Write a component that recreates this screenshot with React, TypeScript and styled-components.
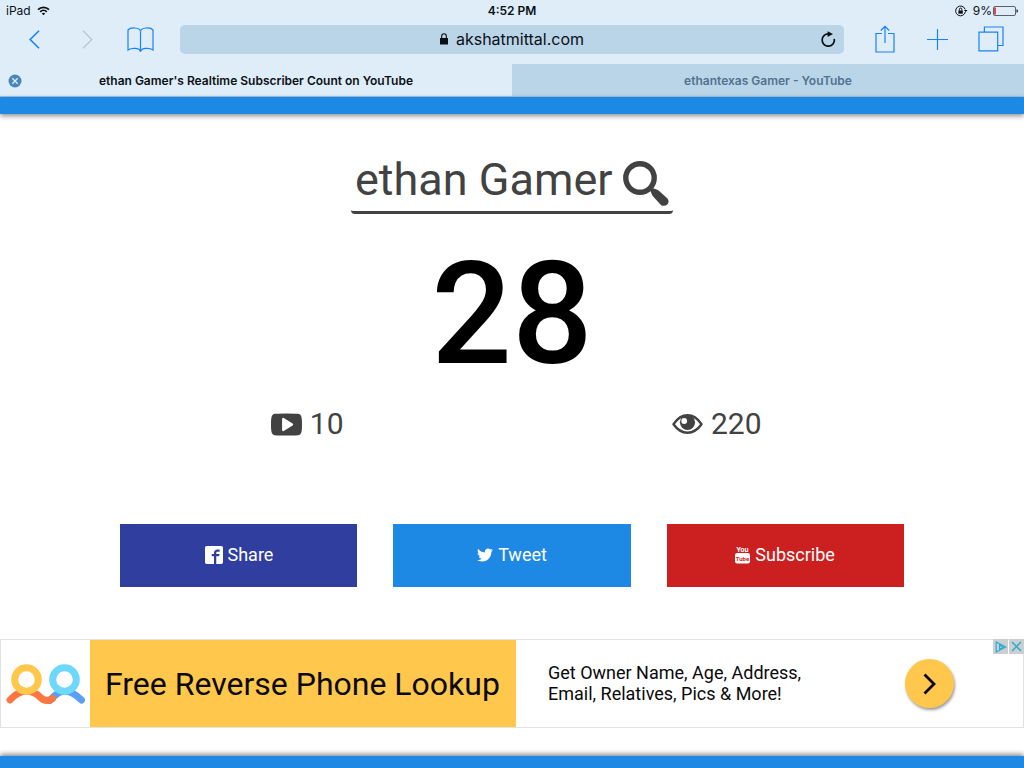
import React from "react";
import styled, { createGlobalStyle } from "styled-components";
import { ImFacebook2 } from "react-icons/im";
import { FaTwitter } from "react-icons/fa";

const GlobalStyle = createGlobalStyle`
  *, *::before, *::after { box-sizing: border-box; }
  body { margin: 0; background: #fff; font-family: Roboto, "Liberation Sans", sans-serif; }
  button, input { font: inherit; color: inherit; }
  svg { display: block; flex: none; }
`;

const Page = styled.div`
  display: flex;
  flex-direction: column;
  min-height: 100vh;
`;

/* Browser chrome */

const Chrome = styled.header`
  background: #dfedf8;
  color: #0b1015;
  font-family: Inter, "Liberation Sans", sans-serif;
`;

const StatusBar = styled.div`
  display: grid;
  grid-template-columns: 1fr auto 1fr;
  align-items: center;
  height: 21px;
  padding: 0 6px;
  font-size: 12px;
  line-height: 21px;
`;

const StatusGroup = styled.div<{ $end?: boolean }>`
  display: flex;
  align-items: center;
  justify-content: ${(p) => (p.$end ? "flex-end" : "flex-start")};
  gap: ${(p) => (p.$end ? "5px" : "6px")};
`;

const Clock = styled.time`
  font-weight: 600;
`;

const BatteryLevel = styled.span`
  display: flex;
  align-items: center;
  gap: 1px;
`;

const NavBar = styled.nav`
  display: grid;
  grid-template-columns: 180px minmax(0, 1fr) 180px;
  align-items: center;
  height: 43px;
  padding-bottom: 6px;
`;

const NavGroup = styled.div<{ $start: number }>`
  display: flex;
  padding-left: ${(p) => p.$start}px;
`;

const NavButton = styled.button`
  display: flex;
  align-items: center;
  justify-content: center;
  width: 53px;
  height: 32px;
  padding: 0;
  border: 0;
  background: none;
  color: #1a82fb;

  &:disabled { color: #b9c8d4; }
`;

const AddressBar = styled.div`
  display: grid;
  grid-template-columns: 32px 1fr 32px;
  align-items: center;
  height: 29px;
  border-radius: 5px;
  background: #bad5e8;
`;

const Address = styled.a`
  grid-column: 2;
  display: flex;
  align-items: center;
  justify-content: center;
  gap: 8px;
  padding-bottom: 2px;
  color: inherit;
  font-size: 16px;
  line-height: 20px;
  text-decoration: none;
`;

const ReloadButton = styled.button`
  display: flex;
  align-items: center;
  justify-content: center;
  height: 28px;
  padding: 0 0 2px;
  border: 0;
  background: none;
`;

const Tabs = styled.div`
  display: grid;
  grid-template-columns: 1fr 1fr;
  height: 33px;
  border-bottom: 1px solid #a4c6e2;
`;

const Tab = styled.div<{ $active?: boolean }>`
  display: grid;
  grid-template-columns: 29px 1fr 29px;
  align-items: center;
  padding-top: 2px;
  background: ${(p) => (p.$active ? "transparent" : "#bad5e8")};
  color: ${(p) => (p.$active ? "inherit" : "#4f7290")};
`;

const TabLink = styled.a`
  grid-column: 2;
  color: inherit;
  font-size: 12px;
  font-weight: 600;
  line-height: 16px;
  text-align: center;
  text-decoration: none;
  white-space: nowrap;
`;

const CloseTab = styled.button`
  display: flex;
  justify-content: center;
  padding: 0;
  border: 0;
  background: none;
`;

/* Page content */

const TopStripe = styled.div`
  height: 17px;
  background: #1e88e5;
  box-shadow: 0 2px 5px rgba(0, 0, 0, 0.45);
`;

const BottomStripe = styled.footer`
  height: 12px;
  background: #1e88e5;
  box-shadow: 0 -2px 5px rgba(0, 0, 0, 0.45);
`;

const Main = styled.main`
  flex: 1;
  display: flex;
  flex-direction: column;
  align-items: center;
  padding: 42px 0 28px;
  color: #424242;
`;

const SearchForm = styled.form`
  display: flex;
  align-items: flex-start;
  gap: 6px;
  height: 58px;
  padding: 0 4px;
  border-bottom: 3px solid #424242;
  border-radius: 4px;
`;

const ChannelInput = styled.input`
  width: 262px;
  height: 47px;
  padding: 0;
  border: 0;
  outline: 0;
  background: none;
  font-size: 45px;
  line-height: 47px;
`;

const SearchButton = styled.button`
  padding: 5px 0 0;
  border: 0;
  background: none;
`;

const Count = styled.h1`
  margin: 29px 0 0;
  color: #000;
  font-size: 142px;
  font-weight: 500;
  line-height: 144px;
`;

const Stats = styled.div`
  display: grid;
  grid-template-columns: 1fr 1fr;
  width: 80%;
  margin-top: 19px;
`;

const Stat = styled.div`
  display: flex;
  align-items: center;
  justify-content: center;
  gap: 8px;
  font-size: 30px;
  line-height: 36px;
`;

const Actions = styled.div`
  display: grid;
  grid-template-columns: repeat(3, 1fr);
  gap: 36px;
  width: 80%;
  margin-top: 82px;
  padding: 0 18px;
`;

const ActionButton = styled.button<{ $color: string }>`
  display: flex;
  align-items: center;
  justify-content: center;
  gap: 5px;
  height: 63px;
  padding: 0 0 2px;
  border: 0;
  background: ${(p) => p.$color};
  color: #fff;
  font-size: 18px;
  line-height: 24px;
`;

/* Advertisement */

const Ad = styled.aside`
  position: relative;
  display: grid;
  grid-template-columns: 89px 426fr 507fr;
  width: 100%;
  height: 89px;
  margin-top: 52px;
  border: 1px solid #e2e2e2;
  background: #fff;
  color: #0a0a0a;
`;

const AdLogo = styled.div`
  display: flex;
  align-items: center;
  justify-content: center;
`;

const AdTitle = styled.a`
  display: flex;
  align-items: center;
  padding: 0 15px;
  background: #ffc84c;
  color: inherit;
  font-size: 32px;
  line-height: 40px;
  text-decoration: none;
  white-space: nowrap;
`;

const AdBody = styled.div`
  display: flex;
  align-items: center;
  justify-content: space-between;
  padding: 0 69px 0 32px;
`;

const AdText = styled.p`
  margin: 0;
  padding-bottom: 2px;
  font-size: 18px;
  line-height: 21px;
`;

const AdGo = styled.button`
  display: flex;
  align-items: center;
  justify-content: center;
  width: 49px;
  height: 49px;
  padding: 0;
  border: 0;
  border-radius: 50%;
  background: #ffc84c;
  box-shadow: 1px 2px 3px rgba(0, 0, 0, 0.4);
`;

const AdControls = styled.div`
  position: absolute;
  top: -1px;
  right: -1px;
  display: flex;
  gap: 1px;
`;

const AdControl = styled.button`
  display: flex;
  align-items: center;
  justify-content: center;
  width: 15px;
  height: 15px;
  padding: 0;
  border: 0;
  background: #cccfd2;
  color: #2bacd0;
`;

const WifiIcon = () => (
  <svg width="13" height="10" viewBox="0 0 13 10" fill="none" stroke="currentColor" strokeWidth="1.7">
    <path d="M1 3.6a7.8 7.8 0 0 1 11 0" />
    <path d="M3.2 5.8a4.7 4.7 0 0 1 6.6 0" />
    <path d="M6.5 9.3 4.8 7.5a2.4 2.4 0 0 1 3.4 0z" fill="currentColor" stroke="none" />
  </svg>
);

const RotationLockIcon = () => (
  <svg width="13" height="12" viewBox="0 0 13 12" fill="none" stroke="currentColor">
    <path d="M10.4 6.6a4.9 4.9 0 1 1-.2-2.2" />
    <path d="M8.9 5h3.6l-1.7 2.1z" fill="currentColor" stroke="none" />
    <path d="M3.4 5.5h4.4v3.2H3.4z" fill="currentColor" stroke="none" />
    <path d="M4.4 5.6V4.3a1.2 1.2 0 0 1 2.4 0v1.3" />
  </svg>
);

const BatteryIcon = () => (
  <svg width="25" height="10" viewBox="0 0 25 10" fill="none">
    <rect x="0.5" y="0.5" width="22" height="9" rx="1.5" stroke="#596068" />
    <path d="M1 1.5h2v7H1z" fill="#e8473c" />
    <path d="M23.5 3.2q1.5.3 1.5 1.8t-1.5 1.8z" fill="#222" />
  </svg>
);

const LockIcon = () => (
  <svg width="8" height="12" viewBox="0 0 8 12" fill="none">
    <path d="M0 5h8v6.5H0z" fill="currentColor" />
    <path d="M1.7 5.5V3a2.3 2.3 0 0 1 4.6 0v2.5" stroke="currentColor" strokeWidth="1.1" />
  </svg>
);

const ReloadIcon = () => (
  <svg width="16" height="16" viewBox="0 0 16 16" fill="none">
    <path d="M14.2 7.8A6.1 6.1 0 1 1 9 3" stroke="currentColor" strokeWidth="1.7" />
    <path d="M7.6.2 13 3 7.6 6z" fill="currentColor" />
  </svg>
);

const BookIcon = () => (
  <svg width="27" height="26" viewBox="0 0 27 26" fill="none" stroke="currentColor" strokeWidth="1.2">
    <path d="M13.5 4.5C13.2 .2 3.500 0 1 3v20c3-2.200 11.500-2.500 12.500 1.500 1-4 9.500-3.700 12.500-1.500V3C23.500 0 13.800.2 13.500 4.500z" />
    <path d="M13.500 4.500v20" />
  </svg>
);

const ShareIcon = () => (
  <svg width="20" height="30" viewBox="0 0 20 30" fill="none" stroke="currentColor" strokeWidth="1.2">
    <path d="M7 8.500H1v18.500h18V8.500H13M10 18V1.500M5.800 5.500 10 1.300l4.200 4.200" />
  </svg>
);

const TabsIcon = () => (
  <svg width="26" height="28" viewBox="0 0 26 28" fill="none" stroke="currentColor" strokeWidth="1.2">
    <path d="M1 6.200h18.700v18.700H1zM6.400 6V1H25v18.500h-5" />
  </svg>
);

const SearchIcon = () => (
  <svg width="46" height="46" viewBox="0 0 46 46" fill="currentColor">
    <circle cx="17" cy="17" r="14.2" fill="none" stroke="currentColor" strokeWidth="5.4" />
    <path d="M30 27.2 33 28.2Q34.8 28.8 36.2 30l8 7.3q2.600 3 .3 5.900-3.200 2.900-6.600.7L30.400 35.800Q29 34.200 28.500 32.400L27.300 29.800z" />
  </svg>
);

const VideoIcon = () => (
  <svg width="31" height="31" viewBox="0 0 1792 1792" fill="currentColor">
    <path d="M1280 896q0-37-30-54l-512-320q-31-20-65-2-33 18-33 56v640q0 38 33 56 16 8 31 8 20 0 34-10l512-320q30-17 30-54zm512 0q0 96-1 150t-8.500 136.500-22.500 147.500q-16 73-69 123t-124 58q-222 25-671 25t-671-25q-71-8-124.500-58t-69.500-123q-14-65-21.500-147.500t-8.500-136.500-1-150 1-150 8.500-136.500 22.500-147.500q16-73 69-123t124-58q222-25 671-25t671 25q71 8 124.500 58t69.500 123q14 65 21.500 147.500t8.500 136.500 1 150z" />
  </svg>
);

const EyeIcon = () => (
  <svg width="31" height="20" viewBox="0 0 31 20">
    <path d="M1.500 10.200Q7.500 1.300 15.500 1.300t14 8.900Q23.500 18.700 15.500 18.700t-14-8.500z" fill="none" stroke="currentColor" strokeWidth="2.4" strokeLinejoin="round" />
    <circle cx="15.500" cy="8.300" r="7.600" fill="currentColor" />
    <circle cx="12.200" cy="7" r="2.900" fill="#fff" />
  </svg>
);

const YouTubeStackIcon = () => (
  <svg width="15" height="19" viewBox="0 0 15 19" fontFamily="Roboto, sans-serif" fontWeight="700" textAnchor="middle" aria-hidden="true">
    <text x="7.500" y="6.500" fontSize="7" fill="#fff">You</text>
    <rect x="0" y="8" width="15" height="10.500" rx="2.200" fill="#fff" />
    <text x="7.500" y="15.500" fontSize="6" fill="#cc1f1f">Tube</text>
  </svg>
);

const PeopleLogo = () => (
  <svg width="80" height="44" viewBox="0 0 80 44" fill="none" strokeLinecap="round">
    <path d="M44 38.500Q52 29 59 29T75.500 38" stroke="#5a9ff5" strokeWidth="7" />
    <path d="M4 38Q12 29 21 29q7.500.500 13 6 6 6 12.500 1.500" stroke="#fb7640" strokeWidth="7" />
    <circle cx="20.500" cy="17.500" r="11.800" stroke="#ffc84c" strokeWidth="7" fill="#fff" />
    <circle cx="58.500" cy="17.500" r="11.800" stroke="#6dd8fb" strokeWidth="7" fill="#fff" />
  </svg>
);

export default function App() {
  return (
    <Page>
      <GlobalStyle />
      <Chrome>
        <StatusBar>
          <StatusGroup>
            <span>iPad</span>
            <WifiIcon />
          </StatusGroup>
          <Clock>4:52 PM</Clock>
          <StatusGroup $end>
            <RotationLockIcon />
            <BatteryLevel>
              9%
              <BatteryIcon />
            </BatteryLevel>
          </StatusGroup>
        </StatusBar>
        <NavBar>
          <NavGroup $start={8}>
            <NavButton aria-label="Back">
              <svg width="11" height="19" viewBox="0 0 11 19" fill="none" stroke="currentColor" strokeWidth="1.6">
                <path d="M10 .8 1.200 9.500l8.800 8.700" />
              </svg>
            </NavButton>
            <NavButton aria-label="Forward" disabled>
              <svg width="11" height="19" viewBox="0 0 11 19" fill="none" stroke="currentColor" strokeWidth="1.4">
                <path d="m1 .8 8.800 8.700L1 18.200" />
              </svg>
            </NavButton>
            <NavButton aria-label="Bookmarks">
              <BookIcon />
            </NavButton>
          </NavGroup>
          <AddressBar>
            <Address href="#top">
              <LockIcon />
              akshatmittal.com
            </Address>
            <ReloadButton aria-label="Reload">
              <ReloadIcon />
            </ReloadButton>
          </AddressBar>
          <NavGroup $start={14}>
            <NavButton aria-label="Share page">
              <ShareIcon />
            </NavButton>
            <NavButton aria-label="New tab">
              <svg width="21" height="21" viewBox="0 0 21 21" fill="none" stroke="currentColor" strokeWidth="1.2">
                <path d="M10.500 0v21M0 10.500h21" />
              </svg>
            </NavButton>
            <NavButton aria-label="Show tabs">
              <TabsIcon />
            </NavButton>
          </NavGroup>
        </NavBar>
        <Tabs>
          <Tab $active>
            <CloseTab aria-label="Close tab">
              <svg width="14" height="14" viewBox="0 0 14 14">
                <circle cx="7" cy="7" r="6.500" fill="#4a86b8" />
                <path d="m4.300 4.300 5.400 5.400m0-5.400L4.300 9.700" stroke="#dfedf8" strokeWidth="1.3" />
              </svg>
            </CloseTab>
            <TabLink href="#top">ethan Gamer's Realtime Subscriber Count on YouTube</TabLink>
          </Tab>
          <Tab>
            <TabLink href="#youtube">ethantexas Gamer - YouTube</TabLink>
          </Tab>
        </Tabs>
      </Chrome>
      <TopStripe />
      <Main>
        <SearchForm onSubmit={(e) => e.preventDefault()}>
          <ChannelInput type="text" aria-label="Channel name" defaultValue="ethan Gamer" />
          <SearchButton type="submit" aria-label="Search">
            <SearchIcon />
          </SearchButton>
        </SearchForm>
        <Count>28</Count>
        <Stats>
          <Stat>
            <VideoIcon />
            <span>10</span>
          </Stat>
          <Stat>
            <EyeIcon />
            <span>220</span>
          </Stat>
        </Stats>
        <Actions>
          <ActionButton $color="#303f9f">
            <ImFacebook2 size={18} />
            Share
          </ActionButton>
          <ActionButton $color="#1e88e5">
            <FaTwitter size={16} />
            Tweet
          </ActionButton>
          <ActionButton $color="#cc1f1f">
            <YouTubeStackIcon />
            Subscribe
          </ActionButton>
        </Actions>
        <Ad>
          <AdLogo>
            <PeopleLogo />
          </AdLogo>
          <AdTitle href="#ad">Free Reverse Phone Lookup</AdTitle>
          <AdBody>
            <AdText>
              Get Owner Name, Age, Address,
              <br />
              Email, Relatives, Pics &amp; More!
            </AdText>
            <AdGo aria-label="Open">
              <svg width="14" height="22" viewBox="0 0 14 22" fill="none" stroke="#0a0a0a" strokeWidth="2.8">
                <path d="m1.500 1.500 9.500 9.500-9.500 9.500" />
              </svg>
            </AdGo>
          </AdBody>
          <AdControls>
            <AdControl aria-label="AdChoices">
              <svg width="12" height="12" viewBox="0 0 12 12" fill="none" stroke="currentColor" strokeWidth="1.2">
                <path d="M1.200 1v10l9.600-5zM4.600 4v4.500l3.700-2.300z" />
              </svg>
            </AdControl>
            <AdControl aria-label="Close ad">
              <svg width="11" height="11" viewBox="0 0 11 11" fill="none" stroke="currentColor" strokeWidth="1.5">
                <path d="m1 1 9 9m0-9-9 9" />
              </svg>
            </AdControl>
          </AdControls>
        </Ad>
      </Main>
      <BottomStripe />
    </Page>
  );
}
